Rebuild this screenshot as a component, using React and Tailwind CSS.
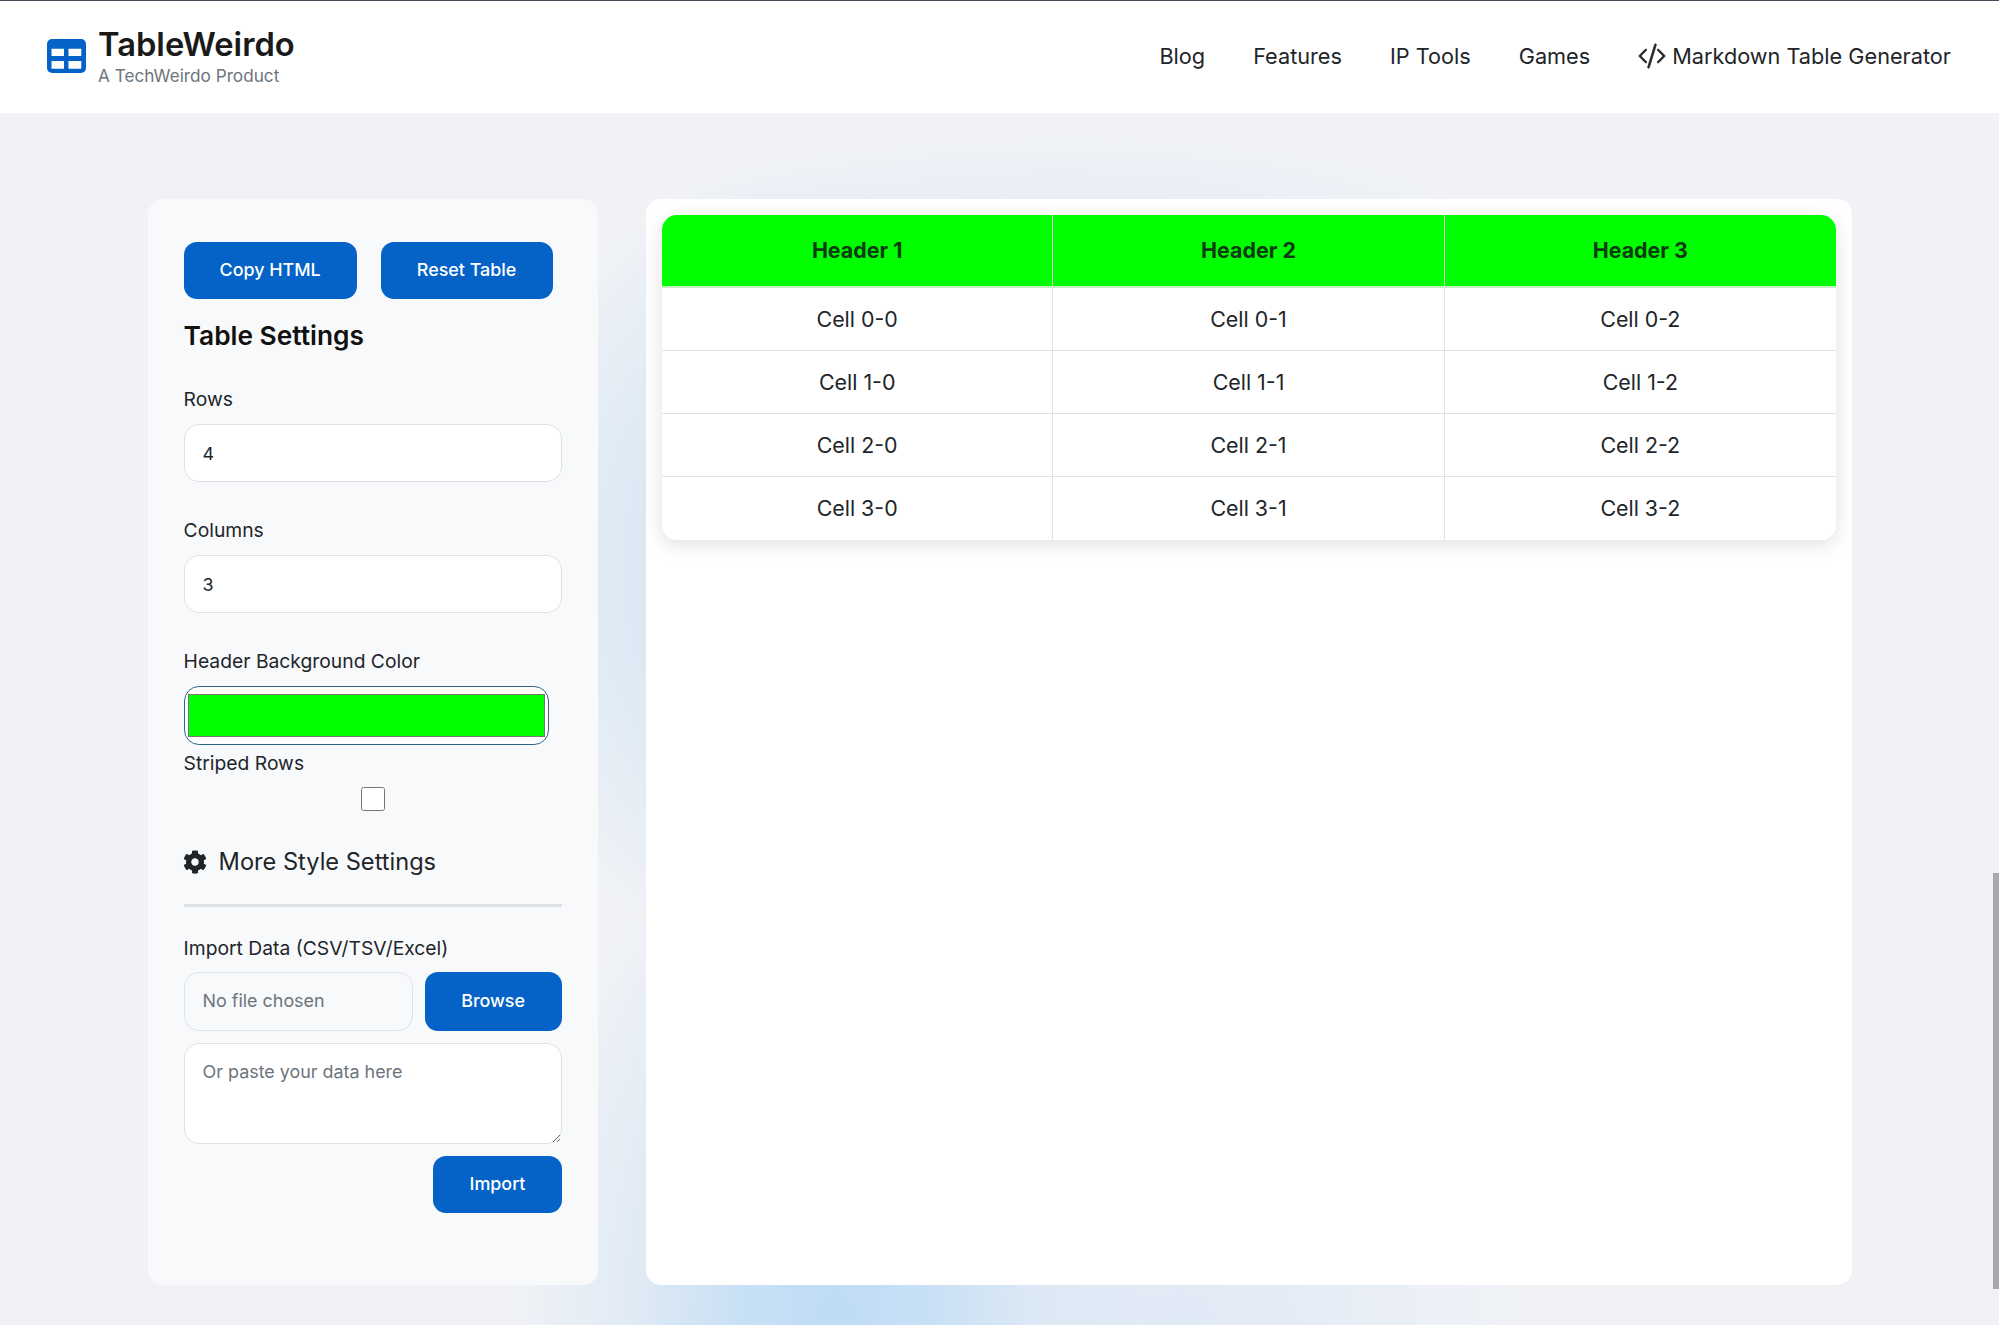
import React from 'react';
import { FaCog } from 'react-icons/fa';
import { BsCodeSlash } from 'react-icons/bs';

const btn = "bg-[#0563c7] text-white rounded-[13px] font-medium text-[17.9px] flex items-center justify-center";
const label = "block text-[#212529] text-[19.3px] leading-[24px]";
const input = "block w-full h-[58px] bg-white border border-[#dee2e6] rounded-[15px] px-[18px] text-[#212529] text-[17.9px] outline-none";

const headers = ['Header 1', 'Header 2', 'Header 3'];
const rows = [0, 1, 2, 3];
const cols = [0, 1, 2];

export default function App() {
  return (
    <div className="relative h-[1325px] overflow-hidden font-['Inter',sans-serif] bg-[#f0f2f6] bg-[radial-gradient(ellipse_320px_520px_at_835px_1325px,#bfdcf6_0%,#c8e0f5_30%,rgba(215,230,244,0.6)_65%,rgba(240,242,246,0)_100%),radial-gradient(ellipse_340px_300px_at_1180px_1325px,rgba(222,232,246,0.9)_0%,rgba(240,242,246,0)_100%),radial-gradient(ellipse_320px_400px_at_800px_570px,#c9e0f2_0%,rgba(201,224,242,0.55)_50%,rgba(240,242,246,0)_100%),radial-gradient(ellipse_400px_75px_at_1060px_215px,#e6ebf6_0%,rgba(240,242,246,0)_100%)]">
      <header className="h-[113px] bg-white border-t border-[#4b4b5c] flex items-center justify-between pl-[47px] pr-[48px]">
        <div className="flex items-center gap-[12px]">
          <svg width="39" height="34" viewBox="0 0 39 34" className="mt-[-2px]">
            <rect x="0" y="0" width="39" height="34" rx="5" fill="#0563c7" />
            <rect x="4.5" y="9.7" width="12.5" height="7.3" fill="#fff" rx="0.5" />
            <rect x="21.5" y="9.7" width="12.8" height="7.3" fill="#fff" rx="0.5" />
            <rect x="4.5" y="22" width="12.5" height="7.7" fill="#fff" rx="0.5" />
            <rect x="21.5" y="22" width="12.8" height="7.7" fill="#fff" rx="0.5" />
          </svg>
          <div className="flex flex-col mt-[-3px]">
            <span className="text-[#1a1a1a] text-[32.7px] font-semibold leading-[38px]">TableWeirdo</span>
            <span className="text-[#6c757d] text-[17.2px] leading-[20px] mt-[3px]">A TechWeirdo Product</span>
          </div>
        </div>
        <nav className="flex items-center gap-[48px] text-[#212529] text-[21.7px] mt-[-2px]">
          <span>Blog</span>
          <span>Features</span>
          <span>IP Tools</span>
          <span>Games</span>
          <span className="flex items-center gap-[6px]">
            <BsCodeSlash size={28} stroke="currentColor" strokeWidth={0.4} />
            Markdown Table Generator
          </span>
        </nav>
      </header>

      <main className="flex gap-[48px] pl-[148px] pt-[86px]">
        <aside className="w-[450px] h-[1086px] bg-[#f8f9fb] rounded-[15px] pl-[35.6px] pr-[36px] pt-[43px]">
          <div className="flex gap-[24px]">
            <button className={`${btn} w-[173px] h-[57px]`}>Copy HTML</button>
            <button className={`${btn} w-[172px] h-[57px]`}>Reset Table</button>
          </div>
          <h2 className="text-[26.3px] font-semibold text-[#111] leading-[32px] mt-[21px]">Table Settings</h2>

          <label className={`${label} mt-[35px]`}>Rows</label>
          <input className={`${input} mt-[13px]`} value="4" readOnly />

          <label className={`${label} mt-[36px]`}>Columns</label>
          <input className={`${input} mt-[13px]`} value="3" readOnly />

          <label className={`${label} mt-[36px]`}>Header Background Color</label>
          <input
            type="color"
            value="#00ff00"
            readOnly
            className="block w-[365px] h-[59px] mt-[13px] bg-white border border-[#2f6388] rounded-[15px] px-[1px] py-[3px]"
          />
          <label className={`${label} mt-[6px]`}>Striped Rows</label>
          <input type="checkbox" className="block w-[24px] h-[24px] mx-auto mt-[12px]" />

          <div className="flex items-center gap-[12px] mt-[36px] text-[#212529]">
            <FaCog size={24} className="ml-[-1px]" />
            <span className="text-[23.6px] leading-[30px]">More Style Settings</span>
          </div>
          <div className="h-[3px] bg-[#dcdfe3] mt-[27px]" />

          <label className={`${label} mt-[29px]`}>Import Data (CSV/TSV/Excel)</label>
          <div className="flex gap-[12px] mt-[12px]">
            <div className="w-[229px] h-[59px] bg-[#f8f9fa] border border-[#dee2e6] rounded-[15px] pl-[18px] flex items-center text-[#6c757d] text-[17.9px]">No file chosen</div>
            <button className={`${btn} w-[137px] h-[59px]`}>Browse</button>
          </div>
          <textarea
            className="block w-full h-[101px] mt-[12px] bg-white border border-[#dee2e6] rounded-[15px] px-[18px] py-[15px] text-[17.9px] leading-[26px] placeholder:text-[#6c757d] outline-none"
            placeholder="Or paste your data here"
            readOnly
          />
          <div className="flex justify-end mt-[12px]">
            <button className={`${btn} w-[129px] h-[57px]`}>Import</button>
          </div>
        </aside>

        <section className="w-[1206px] h-[1086px] bg-white rounded-[15px] px-[16px] pt-[16px]">
          <table className="w-[1174px] table-fixed border-separate border-spacing-0 rounded-[15px] overflow-hidden shadow-[0_5px_20px_rgba(0,0,0,0.12)] text-[21.4px] text-[#212529]">
            <thead>
              <tr>
                {headers.map((h, i) => (
                  <th
                    key={h}
                    className={`h-[73px] bg-[#00ff00] border-b-[2px] border-[#c5eec5] font-bold text-[#0e3a12] text-[21.4px] text-center ${i < 2 ? 'border-r border-r-[#d5dcd8]' : ''}`}
                  >
                    {h}
                  </th>
                ))}
              </tr>
            </thead>
            <tbody>
              {rows.map((r) => (
                <tr key={r}>
                  {cols.map((c) => (
                    <td
                      key={c}
                      className={`h-[63px] text-center bg-white ${r < 3 ? 'border-b border-[#dee2e6]' : ''} ${c < 2 ? 'border-r border-r-[#dee2e6]' : ''}`}
                    >
                      {`Cell ${r}-${c}`}
                    </td>
                  ))}
                </tr>
              ))}
            </tbody>
          </table>
        </section>
      </main>

      <div className="absolute right-0 top-[873px] w-[6px] h-[416px] bg-[#a8a9ad]" />
    </div>
  );
}
